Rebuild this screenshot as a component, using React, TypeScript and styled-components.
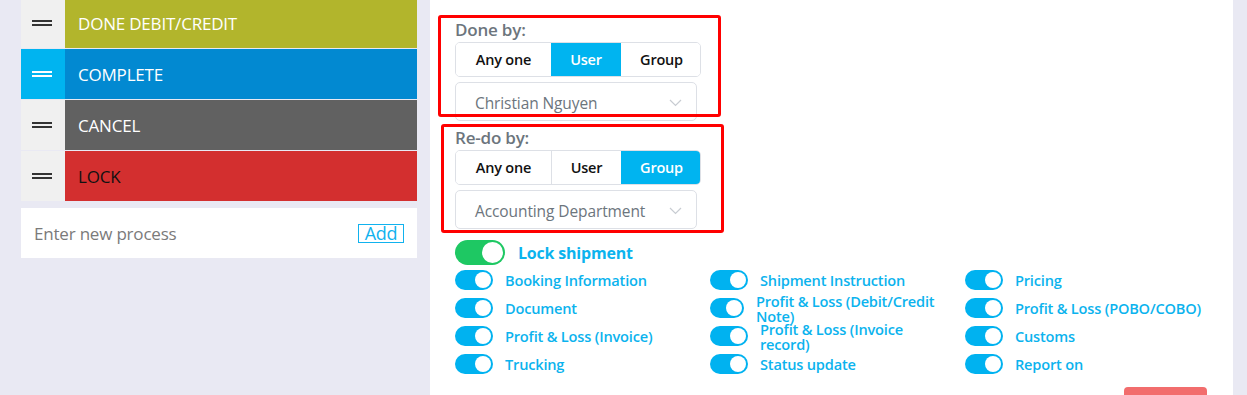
import React from "react";
import styled, { createGlobalStyle } from "styled-components";

const Global = createGlobalStyle`
  html, body { margin: 0; padding: 0; background: #e9e9f3; overflow: hidden; }
  body { font-family: "Open Sans", "Noto Sans", sans-serif; }
  * { box-sizing: border-box; }
`;

const Page = styled.div`
  display: flex;
  align-items: flex-start;
  gap: 13px;
  padding-left: 21px;
  height: 395px;
  overflow: hidden;
`;

const LeftCol = styled.div`
  width: 396px;
  display: flex;
  flex-direction: column;
  margin-top: -2px;
`;

const ProcessList = styled.div`
  display: flex;
  flex-direction: column;
  gap: 1px;
`;

const ProcessRow = styled.div`
  display: flex;
  height: 50px;
`;

const Handle = styled.div<{ $active?: boolean }>`
  width: 44px;
  flex: none;
  background: ${(p) => (p.$active ? "#00b4f0" : "#f0f0f0")};
  display: flex;
  flex-direction: column;
  align-items: center;
  justify-content: center;
  gap: 2px;
  padding-right: 2px;
`;

const Bar = styled.span<{ $active?: boolean }>`
  width: 20px;
  height: 2px;
  background: ${(p) => (p.$active ? "#ffffff" : "#333333")};
`;

const ProcessName = styled.div<{ $bg: string; $fg: string }>`
  flex: 1;
  background: ${(p) => p.$bg};
  color: ${(p) => p.$fg};
  display: flex;
  align-items: center;
  padding-left: 13px;
  font-size: 17px;
  letter-spacing: -0.2px;
`;

const AddRow = styled.div`
  margin-top: 7px;
  height: 50px;
  background: #ffffff;
  display: flex;
  align-items: center;
  padding: 1px 13px 0;
`;

const ProcessInput = styled.input`
  flex: 1;
  border: none;
  outline: none;
  font-family: inherit;
  font-size: 17px;
  letter-spacing: -0.2px;
  color: #333;
  background: transparent;
  padding: 0;
  &::placeholder { color: #7a7a7a; }
`;

const AddButton = styled.button`
  width: 46px;
  height: 19px;
  border: 1px solid #11b2ee;
  background: #fff;
  color: #11b2ee;
  font-family: inherit;
  font-size: 18px;
  letter-spacing: -0.3px;
  padding: 0;
  line-height: 15px;
  display: flex;
  align-items: center;
  justify-content: center;
`;

const RightPanel = styled.div`
  position: relative;
  width: 803px;
  height: 395px;
  overflow: hidden;
  background: #ffffff;
  padding: 18px 0 0 25px;
`;

const Annotation = styled.div<{ $left: number; $top: number; $w: number; $h: number }>`
  position: absolute;
  left: ${(p) => p.$left}px;
  top: ${(p) => p.$top}px;
  width: ${(p) => p.$w}px;
  height: ${(p) => p.$h}px;
  border: 3px solid #ff0000;
  border-radius: 3px;
  pointer-events: none;
`;

const FieldLabel = styled.div<{ $mt?: number }>`
  font-size: 17px;
  font-weight: 600;
  color: #6c757d;
  line-height: 24px;
  height: 24px;
  margin-top: ${(p) => p.$mt ?? 0}px;
  letter-spacing: -0.2px;
`;

const Segmented = styled.div`
  display: flex;
  width: 246px;
  height: 35px;
  border: 1px solid #dde0e6;
  border-radius: 5px;
  overflow: hidden;
`;

const Segment = styled.div<{ $w: number; $active?: boolean; $divider?: boolean }>`
  width: ${(p) => p.$w}px;
  flex: none;
  display: flex;
  align-items: center;
  justify-content: center;
  font-size: 14.5px;
  font-weight: 600;
  letter-spacing: -0.2px;
  color: ${(p) => (p.$active ? "#ffffff" : "#111111")};
  background: ${(p) => (p.$active ? "#00b4f0" : "#ffffff")};
  border-left: ${(p) => (p.$divider ? "1px solid #dde0e6" : "none")};
`;

const Select = styled.div`
  width: 242px;
  height: 39px;
  margin-top: 5px;
  border: 1px solid #dde0e6;
  border-radius: 5px;
  display: flex;
  align-items: center;
  justify-content: space-between;
  padding: 2px 14px 0 19px;
  font-size: 15.5px;
  color: #6c757d;
  letter-spacing: -0.1px;
`;

const Chevron = () => (
  <svg width="13" height="8" viewBox="0 0 13 8" fill="none">
    <polyline points="1,1 6.5,6.5 12,1" stroke="#c8ccd2" strokeWidth="1.2" />
  </svg>
);

const LockRow = styled.div`
  display: flex;
  align-items: center;
  gap: 13px;
  margin-top: 11px;
  height: 25px;
`;

const Switch = styled.div<{ $w: number; $h: number; $color: string }>`
  width: ${(p) => p.$w}px;
  height: ${(p) => p.$h}px;
  flex: none;
  border-radius: ${(p) => p.$h / 2}px;
  background: ${(p) => p.$color};
  display: flex;
  align-items: center;
  justify-content: flex-end;
  padding-right: 2px;
`;

const Knob = styled.span<{ $size: number }>`
  width: ${(p) => p.$size}px;
  height: ${(p) => p.$size}px;
  border-radius: 50%;
  background: #ffffff;
`;

const LockLabel = styled.span`
  font-size: 16px;
  font-weight: 700;
  color: #0bb3ee;
  letter-spacing: -0.2px;
`;

const PermGrid = styled.div`
  display: grid;
  grid-template-columns: 255px 255px 1fr;
  row-gap: 8px;
  margin-top: 5px;
`;

const PermItem = styled.div`
  display: flex;
  align-items: center;
  height: 20px;
  gap: 12px;
`;

const PermLabel = styled.span<{ $wrap?: boolean }>`
  font-size: 14.6px;
  font-weight: 600;
  color: #0bb3ee;
  line-height: 15px;
  white-space: ${(p) => (p.$wrap ? "normal" : "nowrap")};
  max-width: ${(p) => (p.$wrap ? "184px" : "none")};
  letter-spacing: -0.2px;
  padding-top: 1px;
`;

const Footer = styled.div`
  display: flex;
  justify-content: flex-end;
  padding-right: 26px;
  margin-top: 13px;
`;

const DangerButton = styled.div`
  width: 83px;
  height: 30px;
  background: #f26d6d;
  border-radius: 4px;
`;

const processes = [
  { name: "DONE DEBIT/CREDIT", bg: "#b2b52c", fg: "#ffffff" },
  { name: "COMPLETE", bg: "#0289d1", fg: "#ffffff", active: true },
  { name: "CANCEL", bg: "#616161", fg: "#ffffff" },
  { name: "LOCK", bg: "#d32f2f", fg: "#111111" },
];

const perms: { label: string; narrow?: boolean; wrap?: boolean }[] = [
  { label: "Booking Information" },
  { label: "Shipment Instruction" },
  { label: "Pricing" },
  { label: "Document" },
  { label: "Profit & Loss (Debit/Credit Note)", narrow: true, wrap: true },
  { label: "Profit & Loss (POBO/COBO)" },
  { label: "Profit & Loss (Invoice)" },
  { label: "Profit & Loss (Invoice record)", wrap: true },
  { label: "Customs" },
  { label: "Trucking" },
  { label: "Status update" },
  { label: "Report on" },
];

function SegmentGroup({ active }: { active: string }) {
  return (
    <Segmented>
      <Segment $w={95} $active={active === "Any one"}>Any one</Segment>
      <Segment $w={70} $active={active === "User"} $divider={active === "Group"}>User</Segment>
      <Segment $w={81} $active={active === "Group"}>Group</Segment>
    </Segmented>
  );
}

export default function App() {
  return (
    <>
      <Global />
      <Page>
        <LeftCol>
          <ProcessList>
            {processes.map((p) => (
              <ProcessRow key={p.name}>
                <Handle $active={p.active}>
                  <Bar $active={p.active} />
                  <Bar $active={p.active} />
                </Handle>
                <ProcessName $bg={p.bg} $fg={p.fg}>{p.name}</ProcessName>
              </ProcessRow>
            ))}
          </ProcessList>
          <AddRow>
            <ProcessInput placeholder="Enter new process" />
            <AddButton>Add</AddButton>
          </AddRow>
        </LeftCol>
        <RightPanel>
          <FieldLabel>Done by:</FieldLabel>
          <SegmentGroup active="User" />
          <Select>
            <span>Christian Nguyen</span>
            <Chevron />
          </Select>
          <FieldLabel $mt={5}>Re-do by:</FieldLabel>
          <SegmentGroup active="Group" />
          <Select>
            <span>Accounting Department</span>
            <Chevron />
          </Select>
          <LockRow>
            <Switch $w={50} $h={25} $color="#1ec863">
              <Knob $size={21} />
            </Switch>
            <LockLabel>Lock shipment</LockLabel>
          </LockRow>
          <PermGrid>
            {perms.map((p) => (
              <PermItem key={p.label}>
                <Switch $w={p.narrow ? 34 : 38} $h={20} $color="#00b2f0">
                  <Knob $size={16} />
                </Switch>
                <PermLabel $wrap={p.wrap}>{p.label}</PermLabel>
              </PermItem>
            ))}
          </PermGrid>
          <Footer>
            <DangerButton />
          </Footer>
          <Annotation $left={8} $top={15} $w={283} $h={102} />
          <Annotation $left={11} $top={124} $w={283} $h={109} />
        </RightPanel>
      </Page>
    </>
  );
}
